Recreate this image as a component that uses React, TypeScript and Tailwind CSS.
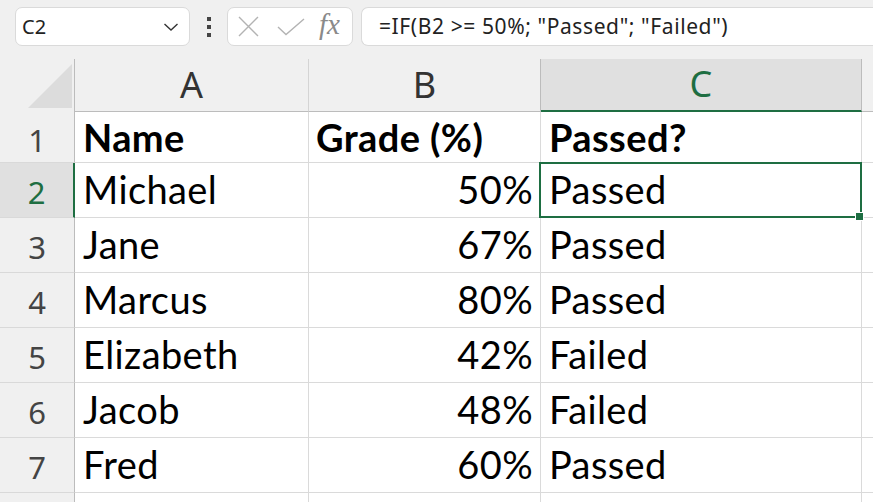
import React from "react";

const rows = [
  { n: 1, a: "Name", b: "Grade (%)", c: "Passed?", bold: true },
  { n: 2, a: "Michael", b: "50%", c: "Passed" },
  { n: 3, a: "Jane", b: "67%", c: "Passed" },
  { n: 4, a: "Marcus", b: "80%", c: "Passed" },
  { n: 5, a: "Elizabeth", b: "42%", c: "Failed" },
  { n: 6, a: "Jacob", b: "48%", c: "Failed" },
  { n: 7, a: "Fred", b: "60%", c: "Passed" },
  { n: 8, a: "", b: "", c: "" },
];

const cellFont = { fontFamily: "Lato, 'Open Sans', sans-serif" };
const uiFont = { fontFamily: "'Noto Sans', 'Open Sans', sans-serif" };

export default function App() {
  return (
    <div className="w-[873px] h-[502px] overflow-hidden bg-[#f0f0f0] relative" style={uiFont}>
      {/* Toolbar */}
      <div className="h-[59px] flex items-start pt-[7px] pl-[15px]">
        <div className="w-[175px] h-[39px] bg-white border border-[#dadada] rounded-[7px] flex items-center pl-[6px] pr-[10px]">
          <span className="text-[20px] text-[#222] leading-none">C2</span>
          <svg className="ml-auto" width="16" height="10" viewBox="0 0 16 10">
            <path d="M1.5 2 L8 8 L14.5 2" fill="none" stroke="#333" strokeWidth="1.4" />
          </svg>
        </div>
        <div className="w-[37px] h-[39px] flex flex-col items-center justify-center gap-[4px]">
          <div className="w-[4px] h-[4px] bg-[#444]" />
          <div className="w-[4px] h-[4px] bg-[#444]" />
          <div className="w-[4px] h-[4px] bg-[#444]" />
        </div>
        <div className="w-[126px] h-[39px] bg-white border border-[#dadada] rounded-[7px] flex items-center pl-[9px]">
          <svg width="23" height="23" viewBox="0 0 23 23">
            <path d="M2 2 L21 21 M21 2 L2 21" fill="none" stroke="#b3b3b3" strokeWidth="1.4" />
          </svg>
          <svg className="ml-[17px]" width="28" height="18" viewBox="0 0 28 18">
            <path d="M1 9 L9 16.5 L27 1" fill="none" stroke="#b3b3b3" strokeWidth="1.4" />
          </svg>
          <span
            className="ml-[14px] text-[29px] italic text-[#8a8a8a] leading-none -mt-[5px]"
            style={{ fontFamily: "'Liberation Serif', 'DejaVu Serif', serif" }}
          >
            fx
          </span>
        </div>
        <div className="ml-[8px] flex-1 h-[39px] bg-white border border-r-0 border-[#dadada] rounded-l-[7px] flex items-center pl-[17px]">
          <span className="text-[21px] tracking-[0.6px] text-[#222] leading-none whitespace-nowrap">
            =IF(B2 &gt;= 50%; "Passed"; "Failed")
          </span>
        </div>
      </div>

      {/* Grid */}
      <div className="grid grid-cols-[75px_234px_232px_321px_1fr]">
        {/* Header row */}
        <div className="h-[53px] relative border-r border-[#bcbcbc]">
          <svg className="absolute left-[28px] top-[5px]" width="44" height="44" viewBox="0 0 44 44">
            <path d="M44 0 L44 44 L0 44 Z" fill="#dcdcdc" />
          </svg>
        </div>
        <div className="h-[53px] flex items-end justify-center pb-[8px] border-b border-[#bcbcbc] border-r border-r-[#d4d4d4] text-[36px] leading-none text-[#333]">
          A
        </div>
        <div className="h-[53px] flex items-end justify-center pb-[8px] border-b border-[#bcbcbc] border-r border-r-[#bcbcbc] text-[36px] leading-none text-[#333]">
          B
        </div>
        <div className="h-[53px] flex items-end justify-center pb-[8px] bg-[#e0e0e0] border-b-2 border-[#1e6e42] border-r border-r-[#bcbcbc] text-[36px] leading-none text-[#1e6e42]">
          C
        </div>
        <div className="h-[53px] border-b border-[#bcbcbc]" />

        {rows.map((r) => {
          const sel = r.n === 2;
          const h = r.n === 1 ? "h-[51px] pb-[6px]" : "h-[55px] pb-[9px]";
          return (
            <React.Fragment key={r.n}>
              <div
                className={`${h} flex items-end justify-center border-b border-[#d9d9d9] text-[31px] leading-none ${
                  sel ? "bg-[#e0e0e0] text-[#1e6e42] border-r-2 border-r-[#1e6e42]" : "text-[#444] border-r border-r-[#bcbcbc]"
                }`}
              >
                {r.n < 8 ? r.n : ""}
              </div>
              <div
                className={`${h} bg-white flex items-end pl-[8px] border-b border-r border-[#dadada] text-[38px] tracking-[0.4px] leading-none text-black ${r.bold ? "font-bold" : ""}`}
                style={cellFont}
              >
                {r.a}
              </div>
              <div
                className={`${h} bg-white flex items-end ${r.bold ? "justify-start pl-[7px]" : "justify-end pr-[7px]"} border-b border-r border-[#dadada] text-[38px] tracking-[0.4px] leading-none text-black ${r.bold ? "font-bold" : ""}`}
                style={cellFont}
              >
                {r.b}
              </div>
              <div
                className={`${h} bg-white relative flex items-end pl-[8px] border-b border-r border-[#dadada] text-[38px] tracking-[0.4px] leading-none text-black ${r.bold ? "font-bold" : ""}`}
                style={cellFont}
              >
                {r.c}
                {sel && (
                  <>
                    <div className="absolute z-10 -left-[2px] -top-[1px] -right-[1px] -bottom-[1px] border-2 border-[#1e6e42]" />
                    <div className="absolute z-20 -right-[3px] -bottom-[4px] w-[9px] h-[9px] bg-[#1e6e42] border border-white" />
                  </>
                )}
              </div>
              <div className={`${h} bg-white border-b border-[#dadada]`} />
            </React.Fragment>
          );
        })}
      </div>
    </div>
  );
}
